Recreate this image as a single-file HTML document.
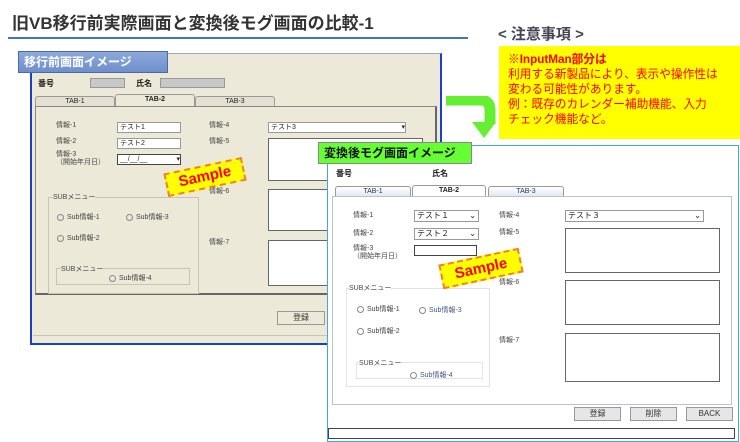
<!DOCTYPE html><html><head><meta charset="utf-8"><style>
*{margin:0;padding:0;box-sizing:border-box}
body{width:740px;height:442px;background:#fff;position:relative;overflow:hidden;font-family:"Liberation Sans","Noto Sans CJK JP",sans-serif;color:#222}
.a{position:absolute;white-space:nowrap}
.s{font-size:7px;color:#444}
.sel{position:absolute;background:#fff;border:1px solid #999;font-size:7px;padding-left:2px;line-height:9px}
.ta{position:absolute;background:#fff;border:1px solid #666}
.tab{position:absolute;border:1px solid #999;border-bottom:none;border-radius:3px 3px 0 0;font-size:7px;text-align:center;line-height:10px}
.btn{position:absolute;border:1px solid #999;background:#e6e6e6;font-size:8px;text-align:center;line-height:12px;color:#333}
.stamp{position:absolute;background:#ffff00;border:2px dashed #f08030;color:#f00;font-weight:bold;font-size:15px;text-align:center;transform:rotate(-12deg)}
.rad{display:inline-block;width:7px;height:7px;border:1px solid #888;border-radius:50%;vertical-align:middle;margin-right:3px}
</style></head><body>
<div class="a" style="left:12px;top:9px;font-size:17px;font-weight:bold;color:#333">旧VB移行前実際画面と変換後モグ画面の比較-1</div>
<div class="a" style="left:8px;top:37px;width:460px;height:2px;background:#4472c4"></div>
<div class="a" style="left:498px;top:23px;font-size:15px;font-weight:bold;color:#445">&lt; 注意事項 &gt;</div>
<div class="a" style="left:499px;top:46px;width:241px;height:93px;background:#ffff00;color:#f00;font-size:11.7px;line-height:15px;padding:6px 0 0 9px">
<b>※InputMan部分は</b><br>利用する新製品により、表示や操作性は<br>変わる可能性があります。<br>例：既存のカレンダー補助機能、入力<br>チェック機能など。</div>

<div class="a" style="left:30px;top:53px;width:412px;height:292px;background:#ece9d8;border:2px solid #1c3fc8;border-top:1px solid #9ab"></div>
<div class="a" style="left:18px;top:51px;width:150px;height:22px;background:linear-gradient(#8da9dc,#6f8fcc);border:1px solid #4a6aa8;color:#fff;font-size:12px;font-weight:bold;line-height:20px;padding-left:5px">移行前画面イメージ</div>
<div class="a" style="left:38px;top:78px;font-size:8px;font-weight:bold">番号</div>
<div class="a" style="left:90px;top:78px;width:35px;height:10px;background:#c8c8c8;border:1px solid #999"></div>
<div class="a" style="left:136px;top:78px;font-size:8px;font-weight:bold">氏名</div>
<div class="a" style="left:160px;top:78px;width:65px;height:10px;background:#c8c8c8;border:1px solid #999"></div>
<div class="tab" style="left:35px;top:96px;width:80px;height:11px;background:#e4e1d2">TAB-1</div>
<div class="tab" style="left:115px;top:94px;width:80px;height:13px;background:#ece9d8;font-weight:bold">TAB-2</div>
<div class="tab" style="left:195px;top:96px;width:80px;height:11px;background:#e4e1d2">TAB-3</div>
<div class="a" style="left:35px;top:106px;width:402px;height:189px;border:1px solid #888;border-right:2px solid #666;border-bottom:2px solid #666"></div>
<div class="a s" style="left:56px;top:120px">情報-1</div><div class="sel" style="left:117px;top:122px;width:64px;height:11px">テスト1</div>
<div class="a s" style="left:56px;top:136px">情報-2</div><div class="sel" style="left:117px;top:138px;width:64px;height:11px">テスト2</div>
<div class="a s" style="left:56px;top:151px;line-height:8px">情報-3<br>（開始年月日）</div><div class="sel" style="left:117px;top:154px;width:64px;height:11px;border-color:#444">__/__/__ <span style="float:right">▾</span></div>
<div class="a s" style="left:209px;top:120px">情報-4</div><div class="sel" style="left:268px;top:122px;width:138px;height:11px">テスト3<span style="float:right">▾</span></div>
<div class="a s" style="left:209px;top:136px">情報-5</div><div class="ta" style="left:268px;top:138px;width:155px;height:43px"></div>
<div class="a s" style="left:209px;top:186px">情報-6</div><div class="ta" style="left:268px;top:189px;width:155px;height:42px"></div>
<div class="a s" style="left:209px;top:237px">情報-7</div><div class="ta" style="left:268px;top:240px;width:155px;height:46px"></div>
<div class="a" style="left:48px;top:197px;width:151px;height:97px;border:1px solid #c8c4b4"></div>
<div class="a s" style="left:53px;top:192px;background:#ece9d8">SUBメニュー</div>
<div class="a s" style="left:57px;top:212px"><span class="rad"></span>Sub情報-1</div>
<div class="a s" style="left:126px;top:212px"><span class="rad"></span>Sub情報-3</div>
<div class="a s" style="left:57px;top:233px"><span class="rad"></span>Sub情報-2</div>
<div class="a" style="left:56px;top:268px;width:134px;height:17px;border:1px solid #c8c4b4"></div>
<div class="a s" style="left:61px;top:264px;background:#ece9d8">SUBメニュー</div>
<div class="a s" style="left:109px;top:273px"><span class="rad"></span>Sub情報-4</div>
<div class="btn" style="left:277px;top:311px;width:48px;height:14px;background:#ece9d8">登録</div>
<div class="a" style="left:33px;top:335px;width:300px;height:1px;background:#c8c4b4"></div>
<div class="stamp" style="left:165px;top:165px;width:80px;height:24px;line-height:20px">Sample</div>

<svg class="a" style="left:444px;top:96px" width="56" height="48"><path d="M2 4 H36 Q46 4 46 14 V28" fill="none" stroke="#66ee33" stroke-width="11"/><path d="M34 26 H58 L46 42 Z" fill="#66ee33" transform="translate(-6 0)"/></svg>

<div class="a" style="left:327px;top:145px;width:412px;height:297px;background:#fff;border:1px solid #3fa8dc"></div>
<div class="a" style="left:318px;top:142px;width:154px;height:22px;background:#66ff33;border:1px solid #888;font-size:12px;font-weight:bold;line-height:20px;padding-left:5px;color:#111">変換後モグ画面イメージ</div>
<div class="a" style="left:336px;top:168px;font-size:8px;font-weight:bold">番号</div>
<div class="a" style="left:432px;top:168px;font-size:8px;font-weight:bold">氏名</div>
<div class="tab" style="left:335px;top:186px;width:76px;height:11px;background:linear-gradient(#fff,#dde6f0);color:#335">TAB-1</div>
<div class="tab" style="left:412px;top:185px;width:74px;height:12px;background:#fff;font-weight:bold">TAB-2</div>
<div class="tab" style="left:488px;top:186px;width:76px;height:11px;background:linear-gradient(#fff,#dde6f0);color:#335">TAB-3</div>
<div class="a" style="left:332px;top:196px;width:400px;height:209px;border:1px solid #b8c4cc"></div>
<div class="a s" style="left:353px;top:210px">情報-1</div><div class="sel" style="left:414px;top:210px;width:65px;height:12px;font-size:8px">テスト１<span style="float:right;padding-right:2px">⌄</span></div>
<div class="a s" style="left:353px;top:228px">情報-2</div><div class="sel" style="left:414px;top:228px;width:65px;height:12px;font-size:8px">テスト２<span style="float:right;padding-right:2px">⌄</span></div>
<div class="a s" style="left:353px;top:245px;line-height:8px">情報-3<br>（開始年月日）</div><div class="sel" style="left:414px;top:245px;width:63px;height:11px;border-color:#444"></div>
<div class="a s" style="left:499px;top:210px">情報-4</div><div class="sel" style="left:565px;top:210px;width:139px;height:12px;font-size:8px">テスト３<span style="float:right;padding-right:2px">⌄</span></div>
<div class="a s" style="left:499px;top:227px">情報-5</div><div class="ta" style="left:565px;top:228px;width:155px;height:45px"></div>
<div class="a s" style="left:499px;top:277px">情報-6</div><div class="ta" style="left:565px;top:280px;width:155px;height:45px"></div>
<div class="a s" style="left:499px;top:335px">情報-7</div><div class="ta" style="left:565px;top:333px;width:155px;height:49px"></div>
<div class="a" style="left:346px;top:288px;width:144px;height:99px;border:1px solid #e0e4e8"></div>
<div class="a s" style="left:349px;top:283px;background:#fff">SUBメニュー</div>
<div class="a s" style="left:357px;top:304px"><span class="rad"></span>Sub情報-1</div>
<div class="a s" style="left:419px;top:305px"><span class="rad"></span><span style="color:#458">Sub情報-3</span></div>
<div class="a s" style="left:357px;top:326px"><span class="rad"></span>Sub情報-2</div>
<div class="a" style="left:356px;top:362px;width:127px;height:17px;border:1px solid #e0e4e8"></div>
<div class="a s" style="left:359px;top:358px;background:#fff">SUBメニュー</div>
<div class="a s" style="left:410px;top:370px"><span class="rad"></span><span style="color:#458">Sub情報-4</span></div>
<div class="btn" style="left:574px;top:407px;width:47px;height:14px">登録</div>
<div class="btn" style="left:630px;top:407px;width:47px;height:14px">削除</div>
<div class="btn" style="left:686px;top:407px;width:47px;height:14px">BACK</div>
<div class="a" style="left:328px;top:428px;width:407px;height:11px;border:1px solid #444"></div>
<div class="stamp" style="left:440px;top:256px;width:82px;height:25px;line-height:21px">Sample</div>
</body></html>
